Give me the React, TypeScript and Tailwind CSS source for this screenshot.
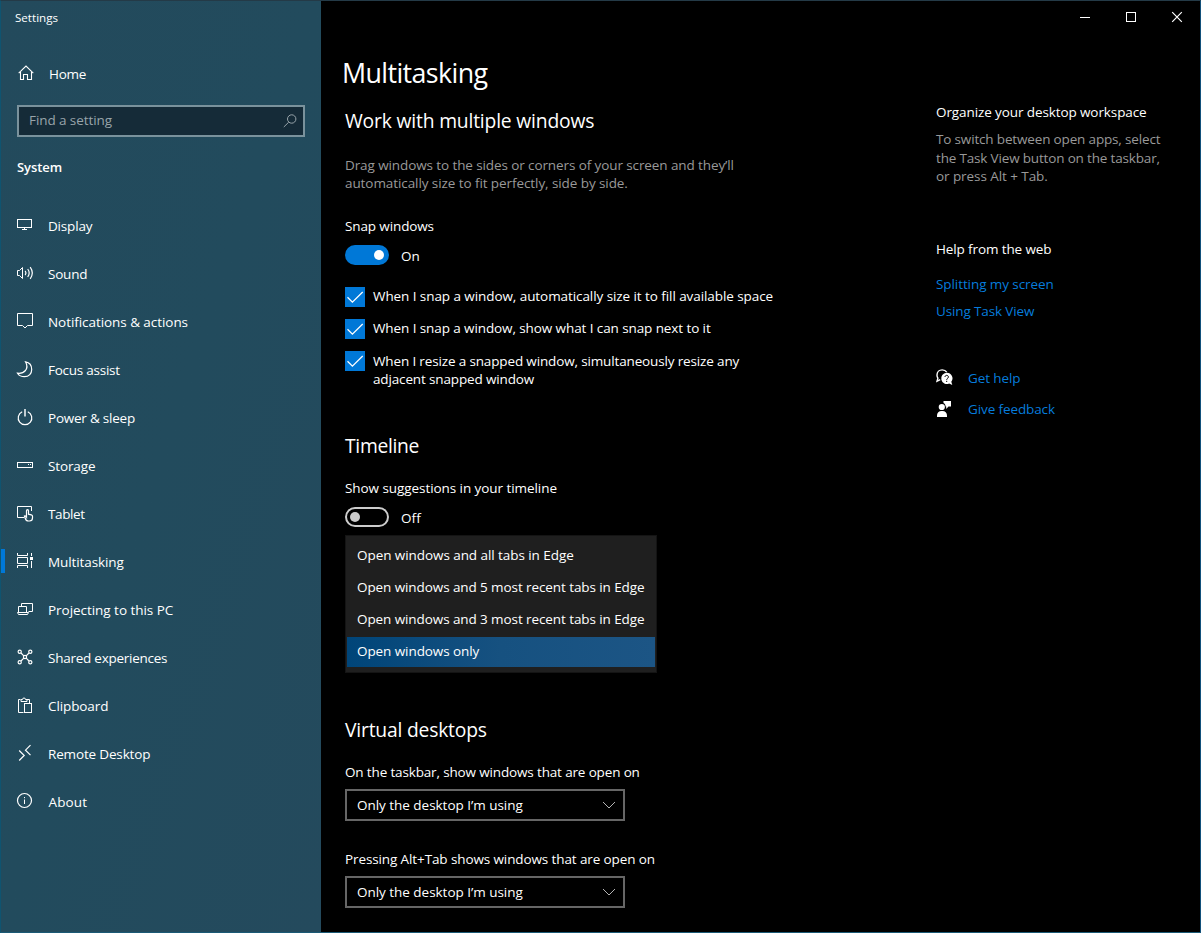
import type { ReactNode } from "react";

type IconProps = { children: ReactNode; className?: string };

function Icon({ children, className = "" }: IconProps) {
  return (
    <svg
      width="20"
      height="20"
      viewBox="0 0 20 20"
      fill="none"
      stroke="currentColor"
      strokeWidth="1"
      className={`shrink-0 ${className}`}
    >
      {children}
    </svg>
  );
}

const navItems: { label: string; tracking: string; active?: boolean; icon: ReactNode }[] = [
  {
    label: "Display",
    tracking: "tracking-[-0.18px]",
    icon: (
      <>
        <rect x="1.5" y="3.5" width="14" height="8" />
        <path d="M8.5 12v1M6 13.5h5" />
      </>
    ),
  },
  {
    label: "Sound",
    tracking: "tracking-[-0.2px]",
    icon: (
      <>
        <path d="M1.5 6.5h2l3-3v11l-3-3h-2z" />
        <path d="M9.2 6.8q1.6 2.2 0 4.4M11.7 5q3 4 0 8M14.2 3.2q4.2 5.8 0 11.6" strokeWidth="1.2" />
      </>
    ),
  },
  {
    label: "Notifications & actions",
    tracking: "tracking-[-0.06px]",
    icon: <path d="M1.5 1.5h15v12h-5L9 16l-2.5-2.5h-5z" />,
  },
  {
    label: "Focus assist",
    tracking: "tracking-[-0.25px]",
    icon: (
      <path
        d="M9.5 1.8c1.8 3.2 1.8 6.4 0 8.7-2 2.300-5 3.100-8 2.700 1.500 2.400 4 3.500 7 3.500 4.500 0 7.200-3.300 7.200-7.300 0-3.900-2.400-7-6.200-7.600z"
        strokeWidth="1.200"
      />
    ),
  },
  {
    label: "Power & sleep",
    tracking: "tracking-[-0.23px]",
    icon: (
      <>
        <path d="M6.200 3.700a6.800 6.800 0 1 0 5.600 0" strokeWidth="1.200" />
        <path d="M9 1v7.500" strokeWidth="1.800" opacity=".8" />
      </>
    ),
  },
  {
    label: "Storage",
    tracking: "tracking-[-0.13px]",
    icon: (
      <>
        <rect x="1.5" y="6.5" width="15" height="5" />
        <path d="M12 8.500h1M14 8.500h1" />
      </>
    ),
  },
  {
    label: "Tablet",
    tracking: "tracking-[-0.4px]",
    icon: (
      <>
        <path d="M8 13.500H1.500v-11h14V7" />
        <path
          d="M10.500 12V6.700a1 1 0 0 1 2 0v3.500l2.800.6c.8.200 1.200.8 1.200 1.500v1.700c0 1.900-1.200 3-3 3h-1.200c-1.600 0-2.500-1-3.100-2.800l-.8-2.200c.7-.5 1.500 0 2.100 1z"
          strokeWidth="1.200"
        />
      </>
    ),
  },
  {
    label: "Multitasking",
    tracking: "tracking-[-0.1px]",
    active: true,
    icon: (
      <>
        <path d="M1.500 1v2.500h10V1M1.500 16v-2.500h10V16" />
        <path d="M1.500 5.500h10v6h-10z" />
        <path d="M15.500 1v3M15.500 9v7" />
        <rect x="14" y="5" width="3" height="3" fill="currentColor" stroke="none" />
      </>
    ),
  },
  {
    label: "Projecting to this PC",
    tracking: "tracking-[-0.04px]",
    icon: (
      <>
        <path d="M5.500 6.500v-3h11v8h-4" />
        <path d="M2.500 12V6.500h8V12M1.500 12.500h11l-1 2h-9z" />
      </>
    ),
  },
  {
    label: "Shared experiences",
    tracking: "tracking-[-0.25px]",
    icon: (
      <g strokeWidth="1.200">
        <circle cx="3.700" cy="3.700" r="1.600" />
        <circle cx="14.300" cy="3.700" r="1.600" />
        <circle cx="3.700" cy="14.300" r="1.600" />
        <circle cx="14.300" cy="14.300" r="1.600" />
        <circle cx="9" cy="9" r="1.600" />
        <path d="M5 5l2.800 2.800M13 5l-2.800 2.800M5 13l2.800-2.800M13 13l-2.800-2.800" />
      </g>
    ),
  },
  {
    label: "Clipboard",
    tracking: "tracking-[-0.1px]",
    icon: (
      <>
        <path d="M7.500 16.500h-5v-13h2M11 3.500h2.500V7" />
        <path d="M5 5.500h6v-2H9.500a1.500 1.500 0 0 0-3 0H5z" />
        <rect x="8.500" y="7.500" width="7" height="9" />
      </>
    ),
  },
  {
    label: "Remote Desktop",
    tracking: "tracking-[-0.16px]",
    icon: <path d="M3.200 6.500l5 5-5 5M14.500 1.200l-5 5 5 5" strokeWidth="1.200" />,
  },
  {
    label: "About",
    tracking: "tracking-[0.1px] pl-[0.6px]",
    icon: (
      <>
        <circle cx="8.500" cy="8.500" r="7" strokeWidth="1.200" />
        <path d="M8.500 5v1.200M8.500 7.500V12" />
      </>
    ),
  },
];

const snapOptions = [
  { lines: ["When I snap a window, automatically size it to fill available space"], tracking: "tracking-[-0.075px]", box: "h-8" },
  { lines: ["When I snap a window, show what I can snap next to it"], tracking: "tracking-[-0.095px]", box: "h-8" },
  {
    lines: ["When I resize a snapped window, simultaneously resize any", "adjacent snapped window"],
    tracking: "tracking-[-0.145px]",
    box: "h-[65px] pt-px",
  },
];

const tabOptions = [
  { label: "Open windows and all tabs in Edge", tracking: "tracking-[-0.065px]" },
  { label: "Open windows and 5 most recent tabs in Edge", tracking: "tracking-[-0.09px]" },
  { label: "Open windows and 3 most recent tabs in Edge", tracking: "tracking-[-0.09px]" },
];

function Select({ value }: { value: string }) {
  return (
    <div className="flex h-8 w-[280px] items-center justify-between border-2 border-[#666] px-[10px] tracking-[-0.03px]">
      <span>{value}</span>
      <svg width="14" height="8" viewBox="0 0 14 8" fill="none" stroke="#b4b4b4" className="mr-[-3px]">
        <path d="M1 1l6 6 6-6" />
      </svg>
    </div>
  );
}

function Sidebar() {
  return (
    <aside className="flex w-[320px] shrink-0 flex-col bg-linear-to-br from-[#234a5c] via-[#224b5d] to-[#244a5d]">
      <div className="pt-[9px] pl-[14px] text-[11.600px] leading-4">Settings</div>
      <div className="mt-[38px] flex h-5 items-center pl-4">
        <Icon>
          <path d="M1.700 9.200L9 2l7.300 7.200M3.500 8v7.500h3v-5h4v5h4V8" strokeWidth="1.100" />
        </Icon>
        <span className="ml-3 tracking-[-0.3px]">Home</span>
      </div>
      <div className="mt-[21px] ml-4 flex h-8 w-[288px] items-center justify-between border-2 border-[#7a929c] bg-[#152b38] pr-[5px] pl-[10px] text-[#98a4aa]">
        <span className="pb-0.5 tracking-[-0.08px]">Find a setting</span>
        <svg width="16" height="16" viewBox="0 0 16 16" fill="none" stroke="currentColor" className="shrink-0">
          <circle cx="9.700" cy="6" r="4.200" />
          <path d="M6.700 9.200L1.800 14" />
        </svg>
      </div>
      <h2 className="mt-[20px] ml-4 text-[13px] leading-5 font-semibold tracking-[-0.05px]">System</h2>
      <nav className="mt-[25px] flex flex-col">
        {navItems.map((item) => (
          <a key={item.label} className="flex h-12 items-center">
            <span className={`mb-0.5 h-6 w-1 ${item.active ? "bg-[#0078d7]" : ""}`} />
            <Icon className="ml-[11px]">{item.icon}</Icon>
            <span className={`ml-3 ${item.tracking}`}>{item.label}</span>
          </a>
        ))}
      </nav>
    </aside>
  );
}

function MainColumn() {
  return (
    <main className="w-[591px] shrink-0 pl-6 text-white">
      <h1 className="mt-[54px] ml-[-3px] text-[26.800px] leading-9 tracking-[-0.600px]">Multitasking</h1>
      <h2 className="mt-[16px] text-[19.300px] leading-7 tracking-[-0.18px]">Work with multiple windows</h2>
      <p className="mt-[21px] leading-[18px] text-[#999]">
        <span className="block tracking-[-0.1px]">Drag windows to the sides or corners of your screen and they’ll</span>
        <span className="block tracking-[-0.08px]">automatically size to fit perfectly, side by side.</span>
      </p>
      <div className="mt-[24px] tracking-[-0.12px]">Snap windows</div>
      <div className="mt-[9px] flex h-5 items-center">
        <span className="flex h-5 w-11 items-center justify-end rounded-full bg-[#0078d7] pr-[5px]">
          <span className="size-[10px] rounded-full bg-white" />
        </span>
        <span className="ml-3 pt-0.5">On</span>
      </div>
      <div className="mt-[22px] flex flex-col">
        {snapOptions.map((option) => (
          <label key={option.lines[0]} className={`flex items-start ${option.box}`}>
            <span className={`flex size-5 shrink-0 items-center justify-center bg-[#0078d7] ${option.lines.length > 1 ? "-mt-px" : ""}`}>
              <svg width="20" height="20" viewBox="0 0 20 20" fill="none" stroke="#fff" strokeWidth="1.300">
                <path d="M2.500 10.300l4.900 4.900L17.700 5" />
              </svg>
            </span>
            <span className={`ml-2 leading-[18px] ${option.tracking}`}>
              {option.lines.map((line) => (
                <span key={line} className="block">
                  {line}
                </span>
              ))}
            </span>
          </label>
        ))}
      </div>
      <h2 className="mt-[16px] text-[19.300px] leading-7 tracking-[-0.3px]">Timeline</h2>
      <div className="mt-[18px] tracking-[-0.065px]">Show suggestions in your timeline</div>
      <div className="mt-[9px] flex h-5 items-center">
        <span className="flex h-5 w-11 items-center rounded-full border-2 border-[#ccc] pl-[3px]">
          <span className="size-[10px] rounded-full bg-[#ccc]" />
        </span>
        <span className="ml-3 pt-0.5 tracking-[0.1px]">Off</span>
      </div>
      <ul className="mt-[8px] flex h-[138px] w-[312px] flex-col border border-[#141414] bg-[#1f1f1f] px-px pt-[3px]">
        {tabOptions.map((option) => (
          <li key={option.label} className={`flex h-8 items-center px-[10px] whitespace-nowrap ${option.tracking}`}>
            {option.label}
          </li>
        ))}
        <li className="mt-0.5 flex h-[30px] items-center bg-linear-to-r from-[#004579] via-[#165180] to-[#1c5585] px-[10px] pb-0.5 tracking-[-0.08px]">
          Open windows only
        </li>
      </ul>
      <h2 className="mt-[43px] text-[19.300px] leading-7 tracking-[-0.2px]">Virtual desktops</h2>
      <div className="mt-[18px] mb-[7px] tracking-[-0.15px]">On the taskbar, show windows that are open on</div>
      <Select value="Only the desktop I’m using" />
      <div className="mt-[28px] mb-[7px] tracking-[-0.11px]">Pressing Alt+Tab shows windows that are open on</div>
      <Select value="Only the desktop I’m using" />
    </main>
  );
}

function HelpColumn() {
  return (
    <section className="flex grow flex-col pl-[24px]">
      <div className="flex h-8 justify-end pt-[6px] pr-[14px]">
        <svg width="106" height="20" viewBox="0 0 106 20" fill="none" stroke="#fff">
          <path d="M0 10.500h10" />
          <rect x="46.500" y="5.500" width="9" height="9" />
          <path d="M92.200 5.200l9.600 9.600M101.800 5.200l-9.600 9.600" strokeWidth="1.200" />
        </svg>
      </div>
      <h3 className="mt-[69px] tracking-[-0.1px]">Organize your desktop workspace</h3>
      <p className="mt-[8px] leading-[18.500px] text-[#999]">
        <span className="block tracking-[-0.16px]">To switch between open apps, select</span>
        <span className="block tracking-[-0.17px]">the Task View button on the taskbar,</span>
        <span className="block tracking-[-0.07px]">or press Alt + Tab.</span>
      </p>
      <h3 className="mt-[53px] tracking-[-0.12px]">Help from the web</h3>
      <a className="mt-[15px] tracking-[-0.08px] text-[#067cdc]">Splitting my screen</a>
      <a className="mt-[7px] tracking-[-0.13px] text-[#067cdc]">Using Task View</a>
      <a className="mt-[47px] flex h-5 items-center text-[#067cdc]">
        <svg width="18" height="18" viewBox="0 0 18 18" className="shrink-0 text-white">
          <path
            d="M4.200 10.700L1 12.300l.9-3.200A5 5 0 0 1 1 6C1 3 3.300.9 6.200.9c2 0 3.600.9 4.500 2.300"
            fill="none"
            stroke="currentColor"
            strokeWidth="1.400"
          />
          <path d="M10.500 3.800a5.600 5.600 0 1 0 2.600 10.700l3.200 1.600-1-3.300a5.600 5.600 0 0 0-4.800-9z" fill="currentColor" />
          <path d="M9 8c0-2.200 3.400-2.200 3.400 0 0 1.400-1.700 1.300-1.700 2.800M10.700 11.800v1.200" fill="none" stroke="#000" strokeWidth="1" />
        </svg>
        <span className="ml-[14px] tracking-[-0.11px]">Get help</span>
      </a>
      <a className="mt-[11px] flex h-5 items-center text-[#067cdc]">
        <svg width="18" height="18" viewBox="0 0 18 18" className="shrink-0 text-white">
          <circle cx="5.800" cy="7" r="3.100" fill="currentColor" />
          <path d="M1 17v-1.500C1 12.800 2.800 11 5.500 11h1c2.700 0 4.500 1.800 4.500 4.500V17z" fill="currentColor" />
          <path d="M7.500 1H15v5.500h-2.500L10.200 9V6.500h-.6C9.500 4.700 8.800 3.500 7.500 3z" fill="currentColor" />
        </svg>
        <span className="ml-[14px] tracking-[-0.11px]">Give feedback</span>
      </a>
    </section>
  );
}

export default function App() {
  return (
    <div className="flex h-[933px] w-[1201px] overflow-hidden border border-t-[#243a47] border-r-[#12507a] border-b-[#1b5a76] border-l-[#0f5470] bg-black font-['Open_Sans','Noto_Sans',sans-serif] text-[13.500px] leading-5 text-white">
      <Sidebar />
      <MainColumn />
      <HelpColumn />
    </div>
  );
}
